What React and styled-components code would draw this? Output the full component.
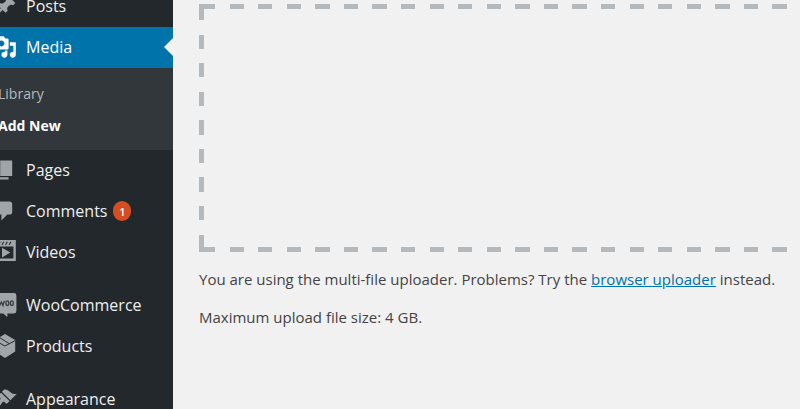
import React from "react";
import styled, { createGlobalStyle } from "styled-components";

const GlobalStyle = createGlobalStyle`
  *, *::before, *::after { box-sizing: border-box; }
  body {
    margin: 0;
    background: #f1f1f1;
    color: #444;
    font-family: "Segoe UI", "Open Sans", "Noto Sans", sans-serif;
    font-size: 15px;
    overflow: hidden;
  }
`;

const Page = styled.div`
  display: flex;
  height: 100vh;
  overflow: hidden;
`;

const Sidebar = styled.nav`
  flex: none;
  width: 173px;
  overflow: hidden;
  background: #23282d;
  font-size: 16px;
`;

const Menu = styled.ul`
  list-style: none;
  margin: -14px 0 0;
  padding: 0;
`;

const MenuItem = styled.li`
  margin-top: ${(p) => (p.$separated ? "12px" : "0")};
`;

const MenuLink = styled.a`
  position: relative;
  display: flex;
  align-items: center;
  height: 41px;
  margin-left: -7px;
  padding-bottom: 1px;
  color: ${(p) => (p.$current ? "#fff" : "#eee")};
  background: ${(p) => (p.$current ? "#0073aa" : "transparent")};
  text-decoration: none;
  white-space: nowrap;

  &::after {
    content: "";
    display: ${(p) => (p.$current ? "block" : "none")};
    position: absolute;
    top: 11px;
    right: 0;
    border: 9px solid transparent;
    border-left-width: 0;
    border-right-color: #f1f1f1;
  }
`;

const MenuIcon = styled.svg`
  flex: none;
  width: 24px;
  height: 24px;
  margin-right: 9px;
  fill: ${(p) => (p.$current ? "#fff" : "#a0a5aa")};
`;

const Badge = styled.span`
  display: flex;
  align-items: center;
  justify-content: center;
  width: 18px;
  height: 20px;
  margin-left: 6px;
  border-radius: 9px;
  background: #d54e21;
  color: #fff;
  font-size: 11px;
  font-weight: 600;
`;

const SubMenu = styled.ul`
  list-style: none;
  margin: 0;
  padding: 10px 0 8px;
  background: #32373c;
`;

const SubLink = styled.a`
  display: block;
  margin-left: -2px;
  line-height: 32px;
  font-size: 14px;
  font-weight: ${(p) => (p.$current ? 700 : 400)};
  color: ${(p) => (p.$current ? "#fff" : "#b4b9be")};
  text-decoration: none;
`;

const Content = styled.main`
  flex: 1;
  min-width: 0;
  padding: 4px 0 0 26px;
`;

const dash = "#b4b9be 0 calc(100% / 14), transparent 0 calc(100% / 7)";

const DropZone = styled.div`
  height: 248px;
  background:
    linear-gradient(#b4b9be, #b4b9be) 0 0 / 5px 5px no-repeat,
    linear-gradient(#b4b9be, #b4b9be) 0 100% / 5px 5px no-repeat,
    repeating-linear-gradient(90deg, ${dash}) 2px 0 / 200px 5px repeat-x,
    repeating-linear-gradient(90deg, ${dash}) 2px 100% / 200px 5px repeat-x,
    repeating-linear-gradient(180deg, ${dash}) 0 2px / 5px 200px repeat-y;
`;

const Note = styled.p`
  margin: 16px 0;
  line-height: 22px;
`;

const TextLink = styled.a`
  color: #0073aa;
  text-decoration: underline;
`;

const icons = {
  pin: (
    <path d="M10.44 3.02l1.82-1.82 6.36 6.35-1.83 1.82c-1.05-.68-2.48-.57-3.41.36l-.75.75c-.92.93-1.04 2.35-.35 3.41l-1.83 1.82-2.41-2.41-2.8 2.79c-.42.42-3.38 2.71-3.8 2.29s1.86-3.39 2.28-3.81l2.79-2.79L4.1 9.36l1.83-1.82c1.05.69 2.48.57 3.4-.36l.75-.75c.93-.92 1.05-2.35.36-3.41z" />
  ),
  media: (
    <path d="M13 11V4c0-.55-.45-1-1-1h-1.67L9 1H5L3.67 3H2c-.55 0-1 .45-1 1v7c0 .55.45 1 1 1h10c.55 0 1-.45 1-1zM7 4.5c1.38 0 2.5 1.12 2.5 2.5S8.38 9.5 7 9.5 4.5 8.38 4.5 7 5.62 4.5 7 4.5zM14 6h5v10.5c0 1.38-1.12 2.5-2.5 2.5S14 17.88 14 16.5s1.12-2.5 2.5-2.5c.17 0 .34.02.5.05V9h-3V6zm-4 8.05V13h2v3.5c0 1.38-1.12 2.5-2.5 2.5S7 17.88 7 16.5 8.12 14 9.5 14c.17 0 .34.02.5.05z" />
  ),
  pages: <path d="M6 15V2h10v13H6zm-1 1h8v2H3V5h2v11z" />,
  comments: (
    <path d="M5 2h9c1.1 0 2 .9 2 2v7c0 1.1-.9 2-2 2h-2l-5 5v-5H5c-1.1 0-2-.9-2-2V4c0-1.1.9-2 2-2z" />
  ),
  videos: (
    <>
      <path fillRule="evenodd" d="M0 0h19v17.500H0zM2 5.500V15.500h15V5.500z" />
      <path
        d="M4.500 4l1.500-2.500M7.500 4l1.500-2.500M10.500 4l1.500-2.500M13.500 4l1.500-2.500"
        stroke="#23282d"
        strokeWidth="0.900"
      />
      <path d="M7.500 6.500v8l7-4z" />
    </>
  ),
  woo: (
    <>
      <path d="M2 0h15.500a2 2 0 0 1 2 2v13a2 2 0 0 1-2 2H12v3l-3.500-3H2a2 2 0 0 1-2-2V2a2 2 0 0 1 2-2z" />
      <g fill="none" stroke="#3b4046" strokeWidth="1.100">
        <path d="M4.500 6.500l1 4L7 7.500l1.300 3 1.200-4" />
        <ellipse cx="12" cy="8.500" rx="1.200" ry="1.900" />
        <ellipse cx="15.700" cy="8.500" rx="1.200" ry="1.900" />
      </g>
    </>
  ),
  products: (
    <>
      <path d="M10 0l8.500 5v9.500L10 20l-8.500-5.500V5z" />
      <path
        d="M1.500 5.500L10 10l8.500-4.500M5.500 3l8 5"
        fill="none"
        stroke="#23282d"
        strokeWidth="0.800"
      />
    </>
  ),
  appearance: (
    <path d="M14.480 11.060L7.410 3.990l1.500-1.500c.5-.56 2.300-.47 3.510.32 1.210.8 1.430 1.280 2.910 2.100 1.180.64 2.450 1.260 4.450.85zm-.71.71L6.700 4.700 4.930 6.470c-.39.39-.39 1.020 0 1.410l1.060 1.060c.39.39.39 1.030 0 1.420-.6.6-1.430 1.110-2.210 1.690-.35.26-.7.53-1.010.84C1.430 14.230.4 16.080 1.400 17.070c.99 1 2.840-.03 4.180-1.360.31-.31.58-.66.85-1.020.57-.78 1.080-1.610 1.690-2.210.39-.39 1.020-.39 1.410 0l1.060 1.060c.39.39 1.020.39 1.410 0z" />
  ),
};

const items = [
  { label: "Posts", icon: "pin" },
  { label: "Media", icon: "media", current: true, children: ["Library", "Add New"] },
  { label: "Pages", icon: "pages" },
  { label: "Comments", icon: "comments", count: 1 },
  { label: "Videos", icon: "videos" },
  { label: "WooCommerce", icon: "woo", separated: true },
  { label: "Products", icon: "products" },
  { label: "Appearance", icon: "appearance", separated: true },
];

export default function App() {
  return (
    <Page>
      <GlobalStyle />
      <Sidebar aria-label="Main menu">
        <Menu>
          {items.map((item) => (
            <MenuItem key={item.label} $separated={item.separated}>
              <MenuLink href="#" $current={item.current}>
                <MenuIcon viewBox="0 0 20 20" aria-hidden="true" $current={item.current}>
                  {icons[item.icon]}
                </MenuIcon>
                {item.label}
                {item.count && <Badge>{item.count}</Badge>}
              </MenuLink>
              {item.children && (
                <SubMenu>
                  {item.children.map((child) => (
                    <li key={child}>
                      <SubLink href="#" $current={child === "Add New"}>
                        {child}
                      </SubLink>
                    </li>
                  ))}
                </SubMenu>
              )}
            </MenuItem>
          ))}
        </Menu>
      </Sidebar>
      <Content>
        <DropZone />
        <Note>
          You are using the multi-file uploader. Problems? Try the{" "}
          <TextLink href="#">browser uploader</TextLink> instead.
        </Note>
        <Note>Maximum upload file size: 4 GB.</Note>
      </Content>
    </Page>
  );
}
